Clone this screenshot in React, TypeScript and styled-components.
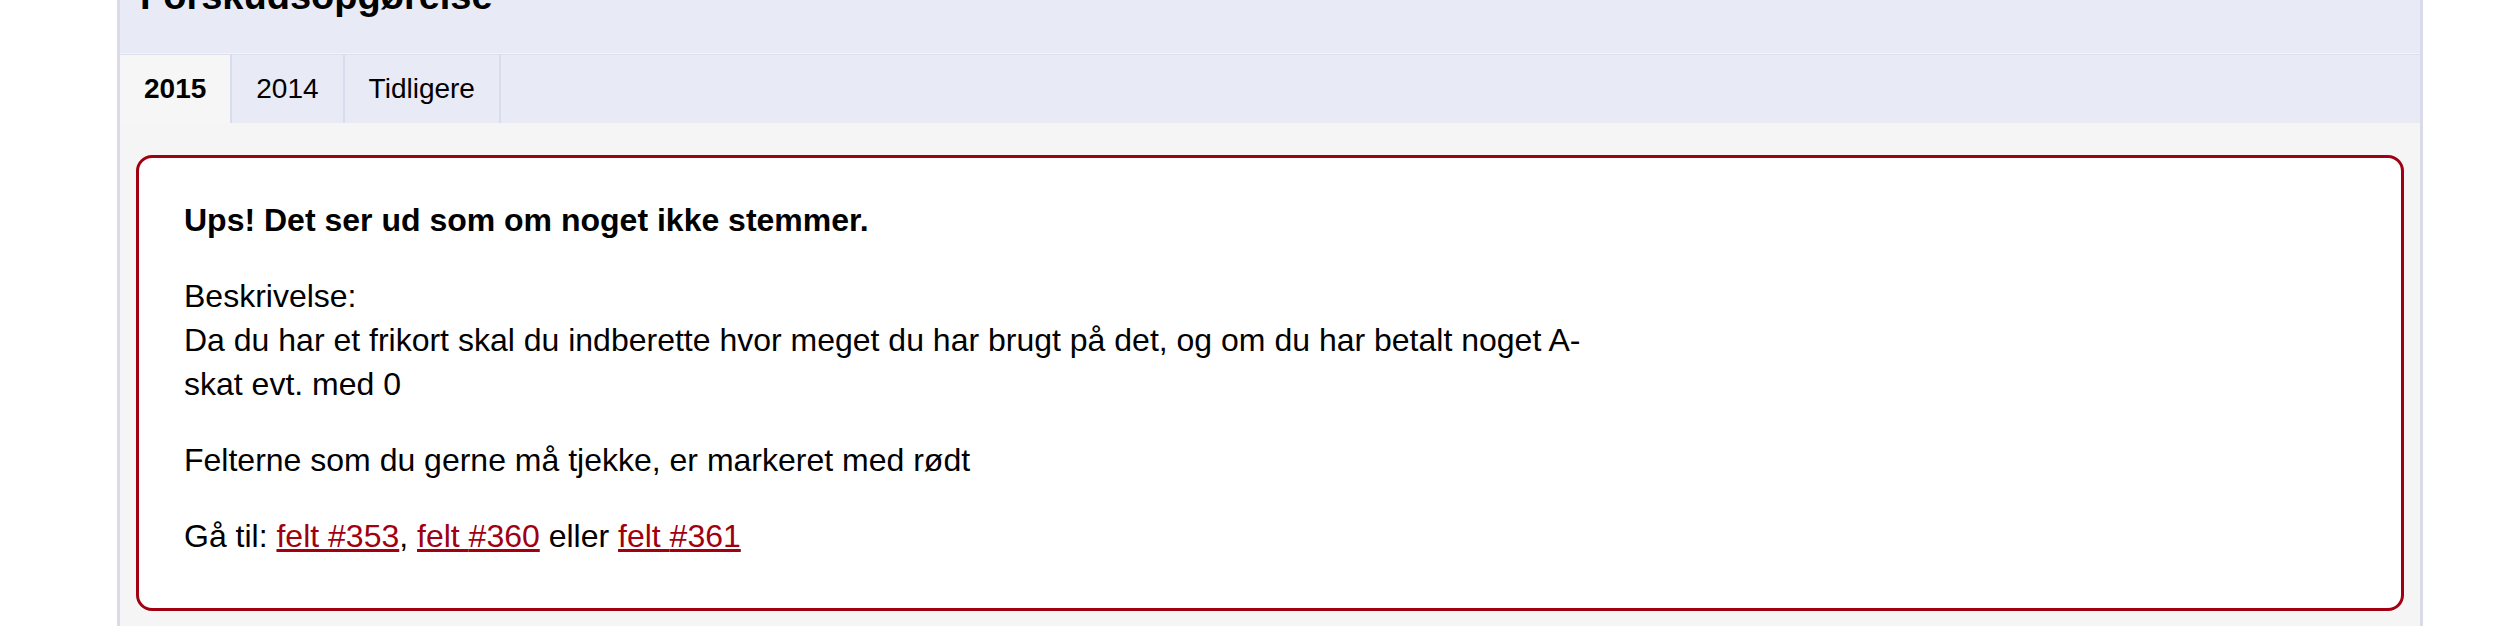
import React from "react";
import styled, { createGlobalStyle } from "styled-components";

const GlobalStyle = createGlobalStyle`
  html, body {
    margin: 0;
    padding: 0;
    background: #ffffff;
  }
  body {
    font-family: "Liberation Sans", Helvetica, Arial, sans-serif;
    color: #000000;
  }
`;

const tabs = [
  { label: "2015", active: true },
  { label: "2014", active: false },
  { label: "Tidligere", active: false },
];

const fields = ["#353", "#360", "#361"];

export default function App() {
  return (
    <>
      <GlobalStyle />
      <Page>
        <Panel>
          <Header>
            <Title>Forskudsopgørelse</Title>
          </Header>
          <TabBar>
            {tabs.map((t) => (
              <Tab key={t.label} $active={t.active}>
                {t.label}
              </Tab>
            ))}
          </TabBar>
          <Content>
            <ErrorBox>
              <Lead>Ups! Det ser ud som om noget ikke stemmer.</Lead>
              <Paragraph>
                Beskrivelse:
                <br />
                Da du har et frikort skal du indberette hvor meget du har brugt
                på det, og om du har betalt noget A-skat evt. med 0
              </Paragraph>
              <Paragraph>
                Felterne som du gerne må tjekke, er markeret med rødt
              </Paragraph>
              <Paragraph>
                Gå til: <FieldLink href="#">felt {fields[0]}</FieldLink>,{" "}
                <FieldLink href="#">felt {fields[1]}</FieldLink> eller{" "}
                <FieldLink href="#">felt {fields[2]}</FieldLink>
              </Paragraph>
            </ErrorBox>
          </Content>
        </Panel>
      </Page>
    </>
  );
}

const Page = styled.div`
  padding-left: 117px;
`;

const Panel = styled.div`
  width: 2306px;
  box-sizing: border-box;
  border-left: 3px solid #d9dbeb;
  border-right: 3px solid #d9dbeb;
  background-color: #f5f5f5;
`;

const Header = styled.div`
  height: 54px;
  box-sizing: border-box;
  display: flex;
  flex-direction: column;
  justify-content: flex-end;
  padding: 0 20px 38px;
  background-color: #e8eaf5;
  border-bottom: 1px solid #f3f4fa;
`;

const Title = styled.h1`
  margin: 0;
  font-size: 38px;
  line-height: 38px;
  font-weight: 700;
  color: #000000;
  white-space: nowrap;
`;

const TabBar = styled.div`
  display: flex;
  height: 69px;
  box-sizing: border-box;
  background-color: #e8eaf5;
  border-top: 1px solid #dcdfed;
`;

const Tab = styled.div<{ $active?: boolean }>`
  display: flex;
  align-items: center;
  padding: 0 24px;
  font-size: 28px;
  font-weight: ${(p) => (p.$active ? 700 : 400)};
  color: #000000;
  background-color: ${(p) => (p.$active ? "#f6f6f6" : "transparent")};
  border-right: 2px solid #d9dcec;
`;

const Content = styled.div`
  padding: 32px 16px 40px;
  background-color: #f5f5f5;
`;

const ErrorBox = styled.div`
  background-color: #ffffff;
  border: 3px solid #a0000f;
  border-radius: 16px;
  padding: 40px 45px 50px;
`;

const Paragraph = styled.p`
  margin: 0 0 32px;
  max-width: 1420px;
  font-size: 32px;
  line-height: 44px;
  color: #000000;

  &:last-child {
    margin-bottom: 0;
  }
`;

const Lead = styled(Paragraph)`
  font-weight: 700;
`;

const FieldLink = styled.a`
  color: #a0000f;
  text-decoration: underline;
`;
